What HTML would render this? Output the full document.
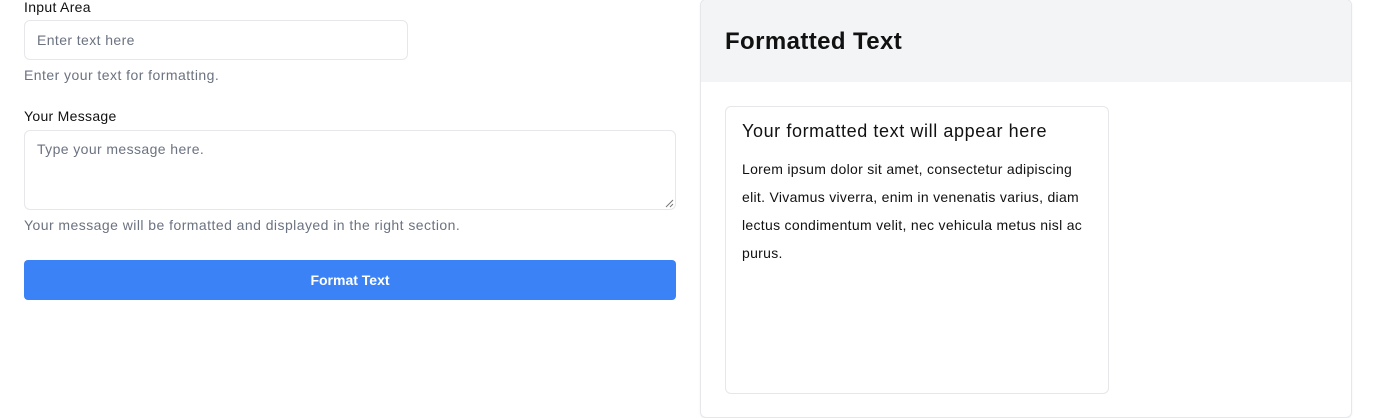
<!DOCTYPE html>
<html><head><style>
*{box-sizing:border-box;margin:0;padding:0}
body{width:1376px;height:418px;background:#fff;font-family:"Liberation Sans",sans-serif;position:relative;overflow:hidden;color:#111827}
.a{position:absolute}
.lbl{font-size:14px;color:#111;letter-spacing:0.3px}
.help{font-size:14px;color:#6b7280;letter-spacing:0.45px}
.box{border:1px solid #e5e7eb;border-radius:6px;background:#fff}
.ph{font-size:14px;color:#6b7280;letter-spacing:0.4px}
</style></head><body>
<div class="a lbl" style="left:24px;top:-1px">Input Area</div>
<div class="a box" style="left:24px;top:20px;width:384px;height:40px"></div>
<div class="a ph" style="left:37px;top:32px">Enter text here</div>
<div class="a help" style="left:24px;top:67px">Enter your text for formatting.</div>
<div class="a lbl" style="left:24px;top:108px">Your Message</div>
<div class="a box" style="left:24px;top:130px;width:652px;height:80px"></div>
<svg class="a" style="left:665px;top:199px" width="9" height="9"><path d="M1 8L8 1M5 8L8 5" stroke="#777" stroke-width="1"/></svg>
<div class="a ph" style="left:37px;top:141px">Type your message here.</div>
<div class="a help" style="left:24px;top:217px">Your message will be formatted and displayed in the right section.</div>
<div class="a" style="left:24px;top:260px;width:652px;height:40px;background:#3b82f6;border-radius:4px;color:#fff;font-weight:bold;font-size:14px;text-align:center;line-height:40px">Format Text</div>

<div class="a" style="left:700px;top:-1px;width:652px;height:419px;border:1px solid #e5e7eb;border-radius:6px;overflow:hidden;box-shadow:0 1px 2px rgba(0,0,0,.05)">
<div style="height:82px;background:#f3f4f6;padding:28px 0 0 24px;font-size:24px;font-weight:bold;color:#111;letter-spacing:0.4px">Formatted Text</div>
<div class="a box" style="left:24px;top:106px;width:384px;height:288px;padding:13px 16px">
<div style="font-size:18px;color:#111;line-height:22px;letter-spacing:0.6px;white-space:nowrap">Your formatted text will appear here</div>
<div style="font-size:14px;color:#111;line-height:28px;margin-top:13px;letter-spacing:0.3px;white-space:nowrap">Lorem ipsum dolor sit amet, consectetur adipiscing<br>elit. Vivamus viverra, enim in venenatis varius, diam<br>lectus condimentum velit, nec vehicula metus nisl ac<br>purus.</div>
</div>
</div>
</body></html>
